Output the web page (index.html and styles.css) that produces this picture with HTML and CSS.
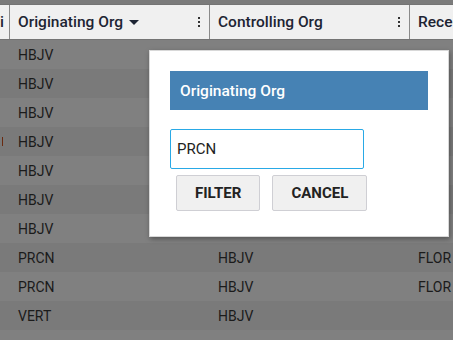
FILE: index.html
```html
<!DOCTYPE html>
<html>
<head>
<meta charset="utf-8">
<link rel="stylesheet" href="styles.css">
</head>
<body>
<div class="page">
  <div class="strip"></div>
  <div class="grid">
    <div class="head">
      <div class="hcell c0"><span class="htext">Di</span></div>
      <div class="hcell c1">
        <span class="htext">Originating Org</span>
        <span class="caret"></span>
        <span class="kebab"><i></i><i></i><i></i></span>
      </div>
      <div class="hcell c2">
        <span class="htext">Controlling Org</span>
        <span class="kebab"><i></i><i></i><i></i></span>
      </div>
      <div class="hcell c3"><span class="htext">Receiving Org</span></div>
    </div>
    <div class="row odd"><div class="cell c0"></div><div class="cell c1">HBJV</div><div class="cell c2"></div><div class="cell c3"></div></div>
    <div class="row even"><div class="cell c0"></div><div class="cell c1">HBJV</div><div class="cell c2"></div><div class="cell c3"></div></div>
    <div class="row odd"><div class="cell c0"></div><div class="cell c1">HBJV</div><div class="cell c2"></div><div class="cell c3"></div></div>
    <div class="row even"><div class="cell c0"><span class="mark"></span></div><div class="cell c1">HBJV</div><div class="cell c2"></div><div class="cell c3"></div></div>
    <div class="row odd"><div class="cell c0"></div><div class="cell c1">HBJV</div><div class="cell c2"></div><div class="cell c3"></div></div>
    <div class="row even"><div class="cell c0"></div><div class="cell c1">HBJV</div><div class="cell c2"></div><div class="cell c3"></div></div>
    <div class="row odd"><div class="cell c0"></div><div class="cell c1">HBJV</div><div class="cell c2"></div><div class="cell c3"></div></div>
    <div class="row even"><div class="cell c0"></div><div class="cell c1">PRCN</div><div class="cell c2">HBJV</div><div class="cell c3">FLOR</div></div>
    <div class="row odd"><div class="cell c0"></div><div class="cell c1">PRCN</div><div class="cell c2">HBJV</div><div class="cell c3">FLOR</div></div>
    <div class="row even"><div class="cell c0"></div><div class="cell c1">VERT</div><div class="cell c2">HBJV</div><div class="cell c3"></div></div>
    <div class="row odd"><div class="cell c0"></div><div class="cell c1"></div><div class="cell c2"></div><div class="cell c3"></div></div>
  </div>

  <div class="dialog">
    <div class="dtitle">Originating Org</div>
    <input class="dinput" type="text" value="PRCN">
    <div class="dbuttons">
      <button class="btn">FILTER</button>
      <button class="btn">CANCEL</button>
    </div>
  </div>
</div>
</body>
</html>
```

FILE: styles.css
```css
* { box-sizing: border-box; }
html, body {
  margin: 0;
  padding: 0;
  width: 453px;
  height: 340px;
  overflow: hidden;
  background: #7d7d7d;
  font-family: Roboto, "Noto Sans", sans-serif;
}
.page {
  position: relative;
  width: 453px;
  height: 340px;
  overflow: hidden;
}
.strip {
  height: 4px;
  background: #7b7b7b;
}
.grid {
  display: flex;
  flex-direction: column;
}
.head {
  display: flex;
  height: 36px;
  background: #f0f0f0;
  border-top: 1px solid #747474;
  border-bottom: 1px solid #747474;
}
.hcell {
  flex: none;
  display: flex;
  align-items: center;
  padding-left: 8px;
  border-right: 1px solid #8a8a8a;
  overflow: hidden;
  white-space: nowrap;
  font-size: 15.5px;
  font-weight: 500;
  color: #1d2433;
}
.c0 { width: 10px; }
.c1, .c2 { width: 200px; }
.c3 { width: 200px; }
.hcell.c0 {
  justify-content: flex-end;
  padding-left: 0;
  padding-right: 5px;
}
.hcell.c3 { border-right: none; }
.caret {
  margin-left: 6px;
  width: 0;
  height: 0;
  border-left: 5px solid transparent;
  border-right: 5px solid transparent;
  border-top: 5px solid #1d2433;
}
.kebab {
  margin-left: auto;
  margin-right: 9px;
  display: flex;
  flex-direction: column;
  gap: 2px;
}
.kebab i {
  display: block;
  width: 2px;
  height: 2px;
  background: #333;
}
.row {
  display: flex;
  height: 29px;
  flex: none;
}
.row.odd { background: #808080; }
.row.even { background: #7a7a7a; }
.cell {
  flex: none;
  display: flex;
  align-items: center;
  padding-left: 8px;
  font-size: 14px;
  color: #1b1b1b;
  white-space: nowrap;
  overflow: hidden;
}
.cell.c0 { padding-left: 2px; }
.mark {
  display: block;
  width: 1px;
  height: 9px;
  background: #6a2a10;
}
.dialog {
  position: absolute;
  left: 149px;
  top: 50px;
  width: 300px;
  height: 187px;
  background: #ffffff;
  border: 1px solid #d8d8d8;
  box-shadow: 1px 2px 5px rgba(0, 0, 0, 0.35);
  padding: 20px 20px 0 20px;
  display: flex;
  flex-direction: column;
  align-items: flex-start;
}
.dtitle {
  width: 258px;
  height: 39px;
  background: #4682b4;
  color: #ffffff;
  font-size: 15.5px;
  font-weight: 500;
  display: flex;
  align-items: center;
  padding-left: 10px;
}
.dinput {
  margin-top: 19px;
  width: 194px;
  height: 40px;
  border: 1px solid #29a9e6;
  border-radius: 2px;
  padding: 0 6px;
  font-family: Roboto, "Noto Sans", sans-serif;
  font-size: 15px;
  color: #222;
  outline: none;
}
.dbuttons {
  margin-top: 6px;
  margin-left: 6px;
  display: flex;
  gap: 12px;
}
.btn {
  height: 36px;
  padding: 0 18px;
  background: #f0f0f0;
  border: 1px solid #cfcfd4;
  border-radius: 2px;
  font-family: Roboto, "Noto Sans", sans-serif;
  font-size: 15px;
  font-weight: 700;
  color: #222;
}
```
